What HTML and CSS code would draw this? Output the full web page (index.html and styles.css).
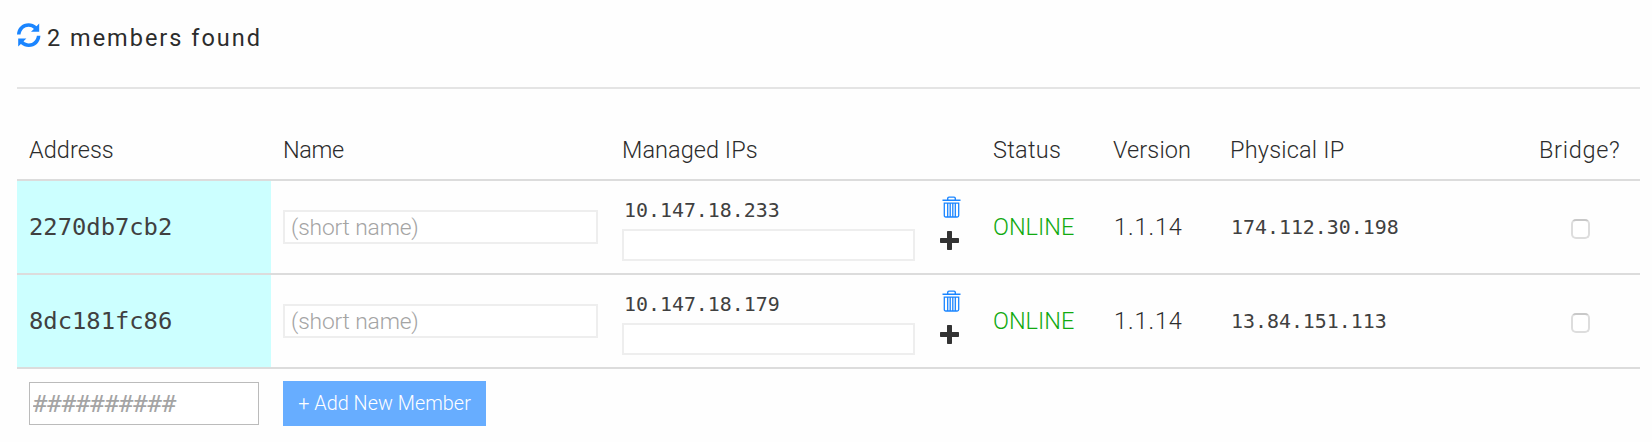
FILE: index.html
```html
<!DOCTYPE html>
<html lang="en">
<head>
<meta charset="utf-8">
<title>Members</title>
<link rel="stylesheet" href="styles.css">
</head>
<body>
<svg class="defs" width="0" height="0" aria-hidden="true">
  <symbol id="trash" viewBox="0 0 19 22">
    <path d="M.5 4.3h18M5.7 3.8V2.4Q5.7 1.1 7 1.1h5q1.300 0 1.300 1.300v1.400" fill="none" stroke="currentColor" stroke-width="1.400"/>
    <path d="M2.300 7.200h14.400v12.300q0 1.500-1.500 1.500H3.800q-1.500 0-1.500-1.500zM5.700 7.500v13.300M8.200 7.500v13.300M10.800 7.500v13.300M13.300 7.500v13.300" fill="none" stroke="currentColor" stroke-width="1.300"/>
  </symbol>
  <symbol id="plus" viewBox="0 0 19 19">
    <path d="M7.700 0h3.600q.7 0 .7.700V7h6.300q.7 0 .7.700v3.600q0 .7-.7.700H12v6.300q0 .7-.7.700H7.700q-.7 0-.7-.7V12H.7q-.7 0-.7-.7V7.700Q0 7 .7 7H7V.7Q7 0 7.700 0z" fill="currentColor"/>
  </symbol>
</svg>
<header class="heading">
  <svg class="refresh" viewBox="0 0 24 24"><g fill="currentColor"><path id="arc" d="M0 11.500C.2 4.800 5.300.2 11.600.2c3 0 5.700 1 7.900 3L22.200.6V8.800H14l2.900-2.900c-1.500-1.400-3.300-2.100-5.300-2.100-4.200 0-7.300 3-8.100 7.700z"/><use href="#arc" transform="rotate(180 11.700 12.100)"/></g></svg>
  <h1 class="title">2 members found</h1>
</header>
<main class="members">
  <div class="row head">
    <div class="cell"><span class="h-tight">Address</span></div>
    <div class="cell"><span class="h-name">Name</span></div>
    <div class="cell"><span class="h-tight">Managed IPs</span></div>
    <div class="cell"></div>
    <div class="cell"><span class="h-status">Status</span></div>
    <div class="cell"><span class="h-version">Version</span></div>
    <div class="cell"><span class="h-physical">Physical IP</span></div>
    <div class="cell"><span class="h-bridge">Bridge?</span></div>
  </div>
  <div class="row member">
    <div class="cell address">2270db7cb2</div>
    <div class="cell"><input class="short" type="text" placeholder="(short name)"></div>
    <div class="cell ips"><span class="ip">10.147.18.233</span><input class="new-ip" type="text"></div>
    <div class="cell actions"><svg class="trash"><use href="#trash"/></svg><svg class="plus"><use href="#plus"/></svg></div>
    <div class="cell online">ONLINE</div>
    <div class="cell version">1.1.14</div>
    <div class="cell physical">174.112.30.198</div>
    <div class="cell bridge"><input class="check" type="checkbox"></div>
  </div>
  <div class="row member">
    <div class="cell address">8dc181fc86</div>
    <div class="cell"><input class="short" type="text" placeholder="(short name)"></div>
    <div class="cell ips"><span class="ip">10.147.18.179</span><input class="new-ip" type="text"></div>
    <div class="cell actions"><svg class="trash"><use href="#trash"/></svg><svg class="plus"><use href="#plus"/></svg></div>
    <div class="cell online">ONLINE</div>
    <div class="cell version">1.1.14</div>
    <div class="cell physical">13.84.151.113</div>
    <div class="cell bridge"><input class="check" type="checkbox"></div>
  </div>
  <div class="row add">
    <div class="cell"><input class="new-address" type="text" placeholder="##########"></div>
    <div class="cell"><button class="button" type="button">+ Add New Member</button></div>
  </div>
</main>
</body>
</html>
```

FILE: styles.css
```css
* { box-sizing: border-box; }
body {
  margin: 0;
  padding: 0 12px 1px 17px;
  background: #fefefe;
  color: #2c2c2c;
  font: 300 23.5px/32px Roboto, "Noto Sans", sans-serif;
}
.defs { display: block; height: 0; }
.heading {
  display: flex;
  gap: 6px;
  height: 89px;
  padding-top: 22px;
  border-bottom: 2px solid #e4e4e4;
}
.refresh { width: 24px; height: 24px; color: #1a85ff; overflow: visible; margin-top: 1px; }
.title { margin: 0; font-size: 23.5px; font-weight: 400; letter-spacing: 2px; line-height: 32px; }
.row {
  display: grid;
  grid-template-columns: 254px 339px 317px 54px 121px 116px 310px 1fr;
}
.head { height: 92px; padding-top: 31px; border-bottom: 2px solid #dcdcdc; }
.head .cell { align-items: center; height: 60px; }
.h-tight { letter-spacing: .05px; }
.h-name { letter-spacing: -.4px; }
.h-status { letter-spacing: .3px; }
.h-version { letter-spacing: .1px; margin-left: -1px; }
.h-physical { letter-spacing: .2px; }
.h-bridge { margin-left: -1px; }
.cell { display: flex; align-items: center; min-width: 0; padding: 0 12px; white-space: nowrap; letter-spacing: .7px; }
.member { height: 94px; border-bottom: 2px solid #dcdcdc; }
.address { background: #cff; color: #404040; font: 23.8px/32px "DejaVu Sans Mono", monospace; letter-spacing: 0; }
input { border-radius: 0; background: #fff; outline: 0; color: #333; font: inherit; }
input::placeholder { color: #a4a4a4; opacity: 1; }
.short { width: 315px; height: 34px; padding: 0 6px; border: 2px solid #eee; font-size: 22.8px; letter-spacing: -.15px; }
.ips { flex-direction: column; align-items: flex-start; padding-top: 14px; }
.ip { height: 34px; padding-left: 2px; color: #404040; font: 19.9px/32px "DejaVu Sans Mono", monospace; letter-spacing: 0; }
.new-ip { width: 293px; height: 32px; border: 2px solid #eee; }
.actions { flex-direction: column; align-items: flex-start; gap: 13px; padding: 15px 0 0 13px; }
.trash { width: 19px; height: 22px; margin-left: 2px; color: #1a85ff; }
.plus { width: 19px; height: 19px; color: #333; }
.online { color: #1a1; letter-spacing: 0; }
.version { letter-spacing: .9px; }
.physical { padding: 2px 0 0 13px; color: #404040; font: 19.9px/32px "DejaVu Sans Mono", monospace; letter-spacing: 0; }
.bridge { padding: 3px 0 0 43px; }
.check { appearance: none; width: 19px; height: 20px; margin: 0; border: 2px solid #ddd; border-top-color: #c8c8c8; border-radius: 5px; }
.add { padding-top: 12px; height: 57px; }
.new-address { width: 230px; height: 43px; padding: 0 3px; border: 1px solid #bbb; font: 300 23.8px/32px "DejaVu Sans Mono", monospace; }
.button { width: 203px; height: 45px; padding: 0; border: 0; background: #67adff; color: #fff; font: 300 19.8px/32px Roboto, sans-serif; letter-spacing: .05px; }
```
